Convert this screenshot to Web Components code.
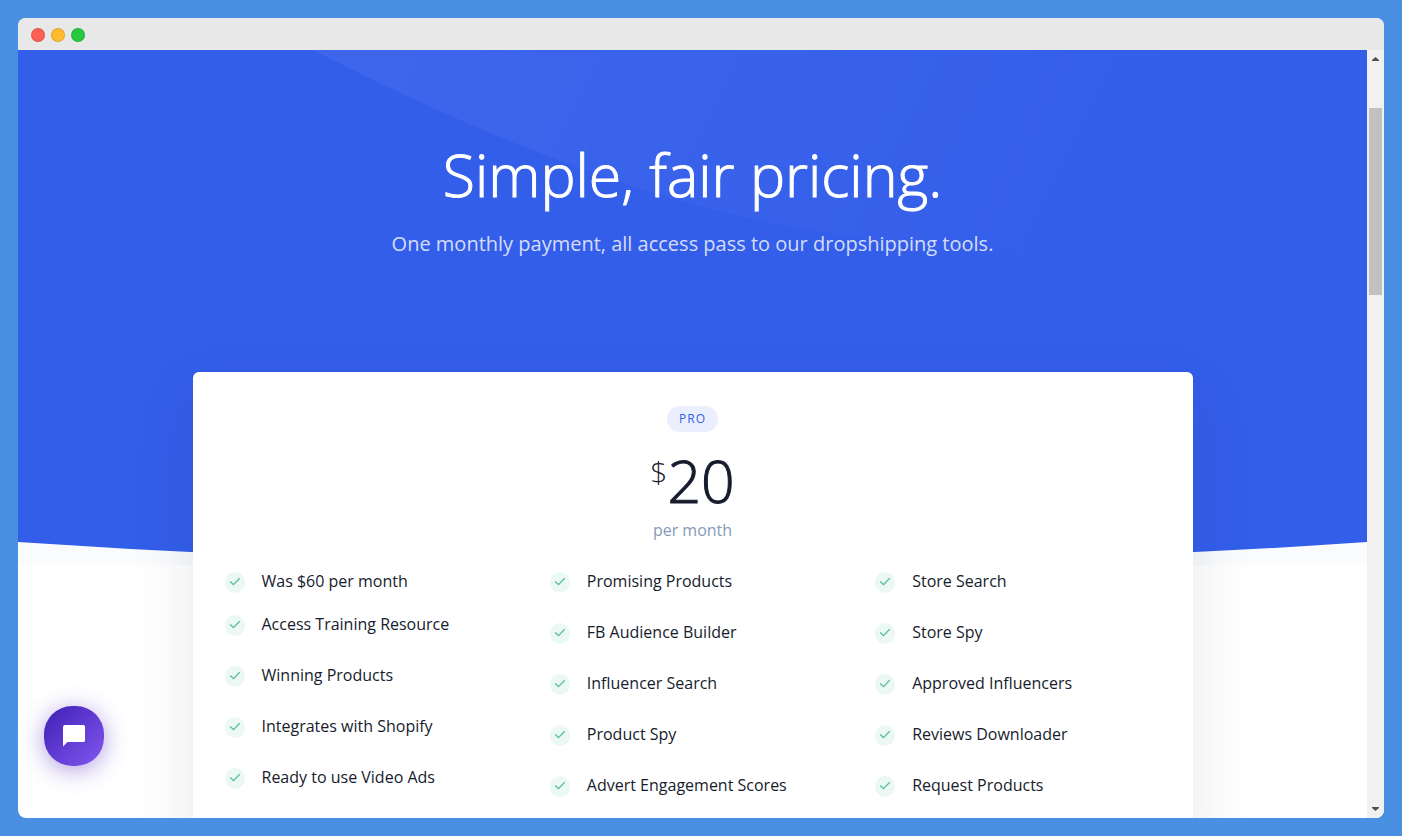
<!DOCTYPE html>
<html lang="en">
<head>
<meta charset="utf-8">
<meta name="viewport" content="width=device-width, initial-scale=1">
<title>Pricing</title>
<style>
    html, body {
        margin: 0;
        height: 100%;
    }

    body {
        box-sizing: border-box;
        padding: 18px;
        background: #4a90e2;
        color: #161c2d;
        font-family: "Open Sans", "Noto Sans", sans-serif;
        font-size: 16px;
        line-height: 27px;
    }
</style>
</head>
<body>
<browser-window>
    <pricing-hero>
        <span slot="title">Simple, fair pricing.</span>
        <span slot="lead">One monthly payment, all access pass to our dropshipping tools.</span>
    </pricing-hero>
    <pricing-card plan="PRO" price="20" period="per month">
        <feature-list compact>
            <feature-item>Was $60 per month</feature-item>
            <feature-item>Access Training Resource</feature-item>
            <feature-item>Winning Products</feature-item>
            <feature-item>Integrates with Shopify</feature-item>
            <feature-item>Ready to use Video Ads</feature-item>
        </feature-list>
        <feature-list>
            <feature-item>Promising Products</feature-item>
            <feature-item>FB Audience Builder</feature-item>
            <feature-item>Influencer Search</feature-item>
            <feature-item>Product Spy</feature-item>
            <feature-item>Advert Engagement Scores</feature-item>
        </feature-list>
        <feature-list>
            <feature-item>Store Search</feature-item>
            <feature-item>Store Spy</feature-item>
            <feature-item>Approved Influencers</feature-item>
            <feature-item>Reviews Downloader</feature-item>
            <feature-item>Request Products</feature-item>
        </feature-list>
    </pricing-card>
    <chat-button slot="overlay"></chat-button>
</browser-window>

<script>
class BrowserWindow extends HTMLElement {
    constructor() {
        super();
        this.attachShadow({ mode: "open" });
    }

    static get styles() {
        return /* css */`
            :host {
                display: flex;
                flex-direction: column;
                height: 100%;
                border-radius: 8px;
                overflow: hidden;
                background: #fff;
            }

            .bar {
                display: flex;
                flex: none;
                align-items: center;
                gap: 6px;
                height: 32px;
                padding: 2px 13px 0;
                box-sizing: border-box;
                background: #e8e8e8;
            }

            .dot {
                width: 14px;
                height: 14px;
                border-radius: 50%;
                box-sizing: border-box;
                border: 1px solid rgba(0, 0, 0, .12);
            }

            .close { background-color: #ff5f56; }
            .minimize { background-color: #ffbd2e; }
            .zoom { background-color: #27c93f; }

            .view {
                position: relative;
                display: flex;
                flex: 1;
                min-height: 0;
            }

            .page {
                flex: 1;
                min-width: 0;
                overflow: hidden;
            }

            .scrollbar {
                display: flex;
                flex-direction: column;
                flex: none;
                width: 17px;
                background: #f1f1f1;
            }

            .scrollbar svg {
                flex: none;
                width: 17px;
                height: 17px;
                fill: #505050;
            }

            .track {
                flex: 1;
                padding: 41px 2px 0;
            }

            .thumb {
                height: 187px;
                background: #c1c1c1;
            }
        `;
    }

    connectedCallback() {
        this.render();
    }

    render() {
        this.shadowRoot.innerHTML = /* html */`
        <style>${BrowserWindow.styles}</style>
        <div class="bar">
            <span class="dot close"></span>
            <span class="dot minimize"></span>
            <span class="dot zoom"></span>
        </div>
        <div class="view">
            <main class="page"><slot></slot></main>
            <div class="scrollbar" aria-hidden="true">
                <svg viewBox="0 0 17 17"><path d="M5 11h7v-1L8.500 7 5 10z"/></svg>
                <div class="track"><div class="thumb"></div></div>
                <svg viewBox="0 0 17 17"><path d="M5 6h7v1L8.500 10 5 7z"/></svg>
            </div>
            <slot name="overlay"></slot>
        </div>`;
    }
}

class PricingHero extends HTMLElement {
    constructor() {
        super();
        this.attachShadow({ mode: "open" });
    }

    static get styles() {
        return /* css */`
            :host {
                display: block;
                position: relative;
                background: #f9fbfd;
                color: #fff;
                text-align: center;
            }

            .art {
                position: absolute;
                inset: 0;
                width: 100%;
                height: 100%;
            }

            .text {
                position: relative;
                padding: 91px 24px 305px;
            }

            h1 {
                margin: 0 0 20px;
                font-size: 59px;
                font-weight: 300;
                line-height: 66px;
                -webkit-text-stroke: 1px currentColor;
            }

            p {
                margin: 0;
                font-size: 20px;
                line-height: 33px;
                color: rgba(255, 255, 255, .8);
            }
        `;
    }

    connectedCallback() {
        this.render();
    }

    render() {
        this.shadowRoot.innerHTML = /* html */`
        <style>${PricingHero.styles}</style>
        <svg class="art" viewBox="0 0 1349 515" preserveAspectRatio="none" aria-hidden="true">
            <defs>
                <linearGradient id="sweep" gradientUnits="userSpaceOnUse" x1="350" y1="0" x2="1030" y2="340">
                    <stop offset="0" stop-color="#fff" stop-opacity=".05"/>
                    <stop offset="1" stop-color="#fff" stop-opacity="0"/>
                </linearGradient>
            </defs>
            <path fill="#335eea" d="M0 0H1349V492Q674 538 0 492Z"/>
            <path fill="url(#sweep)" d="M295 0C480 94 650 161 832 187C960 206 1080 214 1240 214V0Z"/>
        </svg>
        <div class="text">
            <h1><slot name="title"></slot></h1>
            <p><slot name="lead"></slot></p>
        </div>`;
    }
}

class PricingCard extends HTMLElement {
    constructor() {
        super();
        this.attachShadow({ mode: "open" });
    }

    static get styles() {
        return /* css */`
            :host {
                display: block;
                position: relative;
                box-sizing: border-box;
                max-width: 1000px;
                margin: -193px auto 0;
                padding: 34px 32px 64px;
                border-radius: 6px;
                background: #fff;
                box-shadow: 0 24px 64px rgba(22, 28, 45, .1);
            }

            header {
                display: flex;
                flex-direction: column;
                align-items: center;
                margin-bottom: 24px;
            }

            .badge {
                padding: 0 12px;
                border-radius: 13px;
                background: #ebeffd;
                color: #335eea;
                font-size: 12px;
                line-height: 26px;
                letter-spacing: 1px;
            }

            .price {
                display: flex;
                margin-top: 15px;
                font-weight: 300;
                font-size: 59px;
                line-height: 66px;
            }

            .amount {
                -webkit-text-stroke: 1px currentColor;
            }

            .currency {
                font-size: 30px;
                line-height: 50px;
            }

            .period {
                margin-top: 4px;
                color: #869ab8;
            }

            .features {
                display: grid;
                grid-template-columns: repeat(3, 1fr);
                gap: 40px;
            }
        `;
    }

    connectedCallback() {
        this.render();
    }

    render() {
        this.shadowRoot.innerHTML = /* html */`
        <style>${PricingCard.styles}</style>
        <header>
            <span class="badge">${this.getAttribute("plan")}</span>
            <div class="price"><span class="currency">$</span><span class="amount">${this.getAttribute("price")}</span></div>
            <span class="period">${this.getAttribute("period")}</span>
        </header>
        <div class="features"><slot></slot></div>`;
    }
}

class FeatureList extends HTMLElement {
    constructor() {
        super();
        this.attachShadow({ mode: "open" });
    }

    static get styles() {
        return /* css */`
            :host {
                display: flex;
                flex-direction: column;
                gap: 24px;
            }

            :host([compact]) ::slotted(:first-child) {
                margin-bottom: -8px;
            }
        `;
    }

    connectedCallback() {
        this.setAttribute("role", "list");
        this.render();
    }

    render() {
        this.shadowRoot.innerHTML = /* html */`
        <style>${FeatureList.styles}</style>
        <slot></slot>`;
    }
}

class FeatureItem extends HTMLElement {
    constructor() {
        super();
        this.attachShadow({ mode: "open" });
    }

    static get styles() {
        return /* css */`
            :host {
                display: flex;
                align-items: flex-start;
                gap: 17px;
            }

            svg {
                flex: none;
                width: 20px;
                height: 21px;
                margin-top: 4px;
            }
        `;
    }

    connectedCallback() {
        this.setAttribute("role", "listitem");
        this.render();
    }

    render() {
        this.shadowRoot.innerHTML = /* html */`
        <style>${FeatureItem.styles}</style>
        <svg viewBox="0 0 20 21" aria-hidden="true">
            <rect width="20" height="21" rx="10" fill="#ecf8f4"/>
            <path d="M5.200 9.500 8.500 12.700 14.700 6.300" fill="none" stroke="#55bd99" stroke-width="1.300"/>
        </svg>
        <span><slot></slot></span>`;
    }
}

class ChatButton extends HTMLElement {
    constructor() {
        super();
        this.attachShadow({ mode: "open" });
    }

    static get styles() {
        return /* css */`
            :host {
                position: absolute;
                left: 26px;
                bottom: 52px;
            }

            button {
                display: grid;
                place-items: center;
                width: 60px;
                height: 60px;
                padding: 0;
                border: 0;
                border-radius: 28px;
                background: linear-gradient(135deg, #3f1fb5, #8257f0);
                box-shadow: 0 4px 24px rgba(80, 40, 190, .45);
                cursor: pointer;
            }

            svg {
                width: 24px;
                height: 24px;
                fill: #fff;
            }
        `;
    }

    connectedCallback() {
        this.render();
    }

    render() {
        this.shadowRoot.innerHTML = /* html */`
        <style>${ChatButton.styles}</style>
        <button type="button" aria-label="Open chat">
            <svg viewBox="0 0 24 24"><path d="M3 1H21.500Q23 1 23 2.500V16.500Q23 18 21.500 18H5.500L1 22.500V3Q1 1 3 1Z"/></svg>
        </button>`;
    }
}

customElements.define("browser-window", BrowserWindow);
customElements.define("pricing-hero", PricingHero);
customElements.define("pricing-card", PricingCard);
customElements.define("feature-list", FeatureList);
customElements.define("feature-item", FeatureItem);
customElements.define("chat-button", ChatButton);
</script>
</body>
</html>
